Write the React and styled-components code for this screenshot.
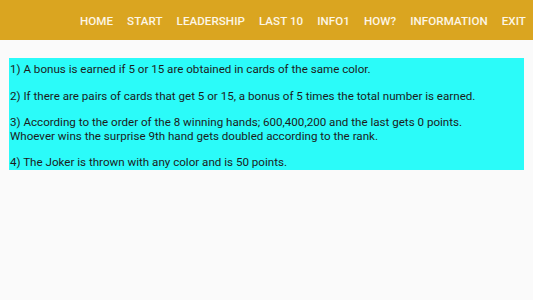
import React from 'react'
import styled, { createGlobalStyle } from 'styled-components'

const GlobalStyle = createGlobalStyle`
  html, body {
    margin: 0;
    padding: 0;
    background: #fafafa;
    font-family: Roboto, "Liberation Sans", sans-serif;
  }
`

const Page = styled.div`
  width: 533px;
  height: 300px;
  background: #fafafa;
`

const Header = styled.header`
  height: 40px;
  box-sizing: border-box;
  padding: 2px 7px 0 0;
  background: #daa520;
  display: flex;
  align-items: center;
  justify-content: flex-end;
  gap: 14px;
`

const NavItem = styled.span`
  color: #fdf6e6;
  font-size: 11.6px;
  font-weight: 500;
  letter-spacing: 0.05px;
`

const Content = styled.main`
  padding: 18px 9px 0 9px;
`

const InfoBox = styled.div`
  background: #2bfbf9;
  padding: 5px 1px 0 1px;
  color: #1c1c1c;
  font-size: 11.6px;
  line-height: 13.35px;
`

const Rule = styled.p`
  margin: 0 0 13.35px 0;
  &:last-child {
    margin-bottom: 0;
  }
`

const navItems = ['HOME', 'START', 'LEADERSHIP', 'LAST 10', 'INFO1', 'HOW?', 'INFORMATION', 'EXIT']

const rules = [
  ['1) A bonus is earned if 5 or 15 are obtained in cards of the same color.'],
  ['2) If there are pairs of cards that get 5 or 15, a bonus of 5 times the total number is earned.'],
  [
    '3) According to the order of the 8 winning hands; 600,400,200 and the last gets 0 points.',
    'Whoever wins the surprise 9th hand gets doubled according to the rank.',
  ],
  ['4) The Joker is thrown with any color and is 50 points.'],
]

export default function App() {
  return (
    <Page>
      <GlobalStyle />
      <Header>
        {navItems.map((item) => (
          <NavItem key={item}>{item}</NavItem>
        ))}
      </Header>
      <Content>
        <InfoBox>
          {rules.map((lines, i) => (
            <Rule key={i}>
              {lines.map((line, j) => (
                <React.Fragment key={j}>
                  {j > 0 && <br />}
                  {line}
                </React.Fragment>
              ))}
            </Rule>
          ))}
        </InfoBox>
      </Content>
    </Page>
  )
}
